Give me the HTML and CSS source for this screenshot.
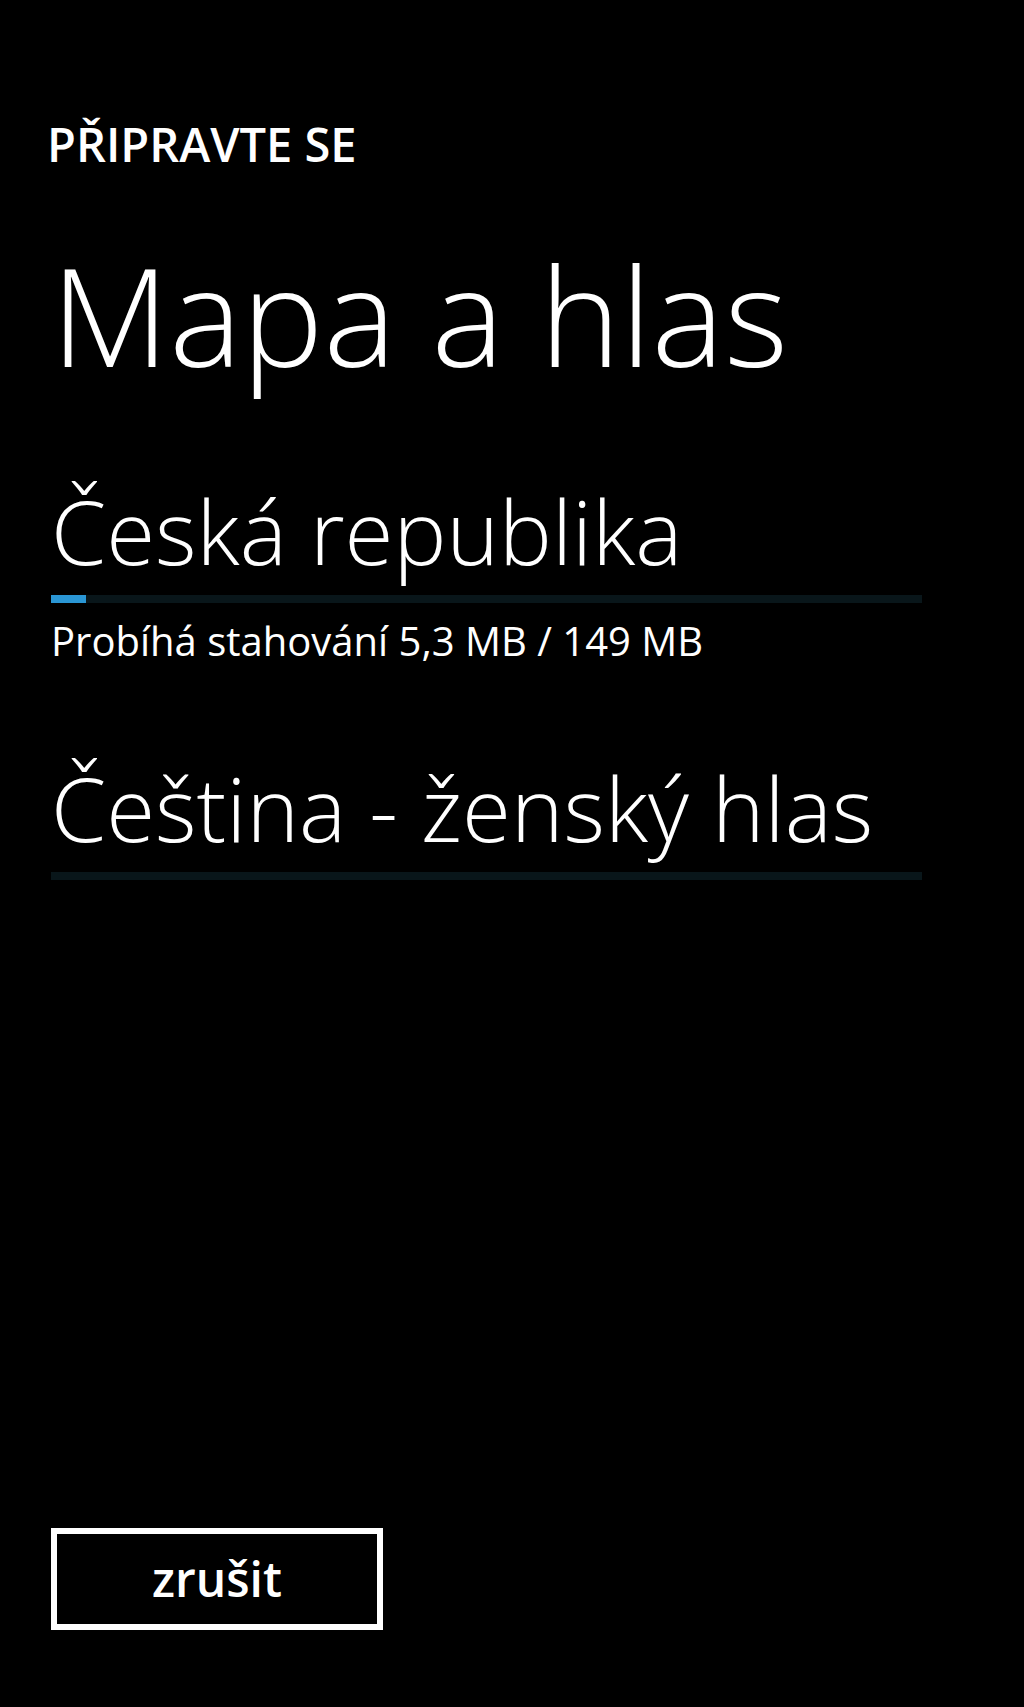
FILE: index.html
```html
<!DOCTYPE html>
<html lang="cs">
<head>
<meta charset="utf-8">
<title>Mapa a hlas</title>
<link rel="stylesheet" href="styles.css">
</head>
<body>
<main class="screen">
  <div class="app-title">PŘIPRAVTE SE</div>
  <h1 class="page-title">Mapa a hlas</h1>
  <section class="item item-first">
    <div class="item-name">Česká republika</div>
    <div class="track"><div class="fill" style="width: 4%"></div></div>
    <div class="item-status">Probíhá stahování 5,3 MB / 149 MB</div>
  </section>
  <section class="item item-second">
    <div class="item-name">Čeština - ženský hlas</div>
    <div class="track"></div>
  </section>
  <div class="actions">
    <button class="btn" type="button">zrušit</button>
  </div>
</main>
</body>
</html>
```
FILE: styles.css
```css
html, body {
  margin: 0;
  padding: 0;
  background: #000;
}
body {
  color: #fff;
  font-family: "Open Sans", "Noto Sans", "DejaVu Sans", sans-serif;
}
.screen {
  box-sizing: border-box;
  min-height: 1707px;
  padding: 121px 102px 77px 51px;
  display: flex;
  flex-direction: column;
}
.app-title {
  margin-left: -4px;
  font-size: 47px;
  line-height: 1;
  font-weight: 600;
  height: 47px;
}
.page-title {
  margin: 78px 0 0 0;
  font-size: 137px;
  line-height: 1;
  font-weight: 300;
  height: 137px;
}
.item-first { margin-top: 103px; }
.item-second { margin-top: 102px; }
.item-name {
  font-size: 89px;
  line-height: 1;
  font-weight: 300;
  height: 90px;
}
.track {
  margin-top: 19px;
  height: 8px;
  background: #09161a;
  display: flex;
}
.fill {
  background: #2a96d4;
  height: 100%;
}
.item-status {
  margin-top: 18px;
  font-size: 40px;
  line-height: 1;
  height: 40px;
}
.actions {
  margin-top: auto;
  display: flex;
}
.btn {
  box-sizing: border-box;
  width: 332px;
  height: 102px;
  border: 6px solid #fff;
  background: #000;
  color: #fff;
  font-family: "Open Sans", "Noto Sans", sans-serif;
  font-size: 48px;
  font-weight: 600;
  line-height: 1;
  padding: 0;
  display: flex;
  align-items: center;
  justify-content: center;
}
```
